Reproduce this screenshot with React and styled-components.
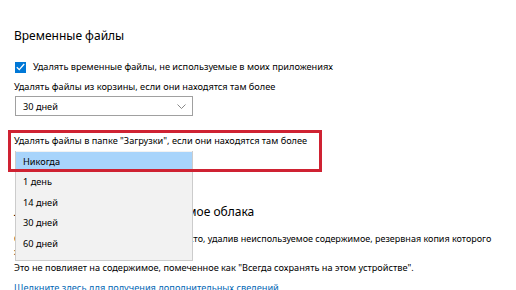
import React from 'react'
import styled, { createGlobalStyle } from 'styled-components'

const GlobalStyle = createGlobalStyle`
    html, body {
        margin: 0;
        padding: 0;
        background: #ffffff;
    }
    body {
        font-family: "Noto Sans", "Open Sans", sans-serif;
        font-size: 9.2px;
        color: #000000;
        overflow: hidden;
    }
`

const options = ['Никогда', '1 день', '14 дней', '30 дней', '60 дней']

function Checkmark() {
    return (
        <svg width="9" height="8" viewBox="0 0 9 8">
            <path d="M0.8 4.2 L3.3 6.6 L8.2 1" fill="none" stroke="#ffffff" strokeWidth="1.3" />
        </svg>
    )
}

function Chevron() {
    return (
        <svg width="9" height="5" viewBox="0 0 9 5">
            <path d="M0.5 0.5 L4.5 4.5 L8.5 0.5" fill="none" stroke="#7a7a7a" strokeWidth="0.9" />
        </svg>
    )
}

export default function App() {
    return (
        <>
            <GlobalStyle />
            <Page>
                <Heading>Временные файлы</Heading>
                <CheckRow>
                    <CheckBox><Checkmark /></CheckBox>
                    <span>Удалять временные файлы, не используемые в моих приложениях</span>
                </CheckRow>
                <Label>Удалять файлы из корзины, если они находятся там более</Label>
                <Select>
                    <span>30 дней</span>
                    <Chevron />
                </Select>

                <Section>
                    <Label>Удалять файлы в папке "Загрузки", если они находятся там более</Label>
                    <Anchor>
                        <Popup>
                            {options.map((o, i) => (
                                <Option key={o} selected={i === 0}>{o}</Option>
                            ))}
                        </Popup>
                    </Anchor>
                    <RedFrame />
                </Section>

                <SubHeading>Локально доступное содержимое облака</SubHeading>
                <Paragraph>
                    Система Windows может освободить место, удалив неиспользуемое содержимое, резервная копия которого
                    хранится в облаке, с этого компьютера.
                </Paragraph>
                <Note>Это не повлияет на содержимое, помеченное как "Всегда сохранять на этом устройстве".</Note>
                <Link>Щелкните здесь для получения дополнительных сведений</Link>
            </Page>
        </>
    )
}

const Page = styled.div`
    padding: 26px 0 0 14px;
    display: flex;
    flex-direction: column;
    align-items: flex-start;
`

const Heading = styled.div`
    font-size: 12px;
    line-height: 20px;
    color: #000;
`

const CheckRow = styled.div`
    display: flex;
    align-items: center;
    gap: 7px;
    margin: 14px 0 0 1px;
    line-height: 14px;
`

const CheckBox = styled.div`
    width: 11px;
    height: 11px;
    background: #0078d7;
    display: flex;
    align-items: center;
    justify-content: center;
`

const Label = styled.div`
    line-height: 14px;
    margin-top: 6px;
`

const Select = styled.div`
    box-sizing: border-box;
    width: 178px;
    height: 20px;
    margin: 2px 0 0 1px;
    border: 1.5px solid #a0a0a0;
    display: flex;
    align-items: center;
    justify-content: space-between;
    padding: 0 6px 0 7px;
`

const Section = styled.div`
    position: relative;
    margin-top: 18px;
    align-self: stretch;
    & > ${Label} {
        margin-top: 0;
    }
`

const Anchor = styled.div`
    position: relative;
    margin-top: 3px;
    height: 20px;
`

const Popup = styled.div`
    position: absolute;
    z-index: 1;
    left: 1px;
    top: 0;
    box-sizing: border-box;
    width: 178px;
    padding: 0.5px 0 6px;
    background: #f2f2f2;
    border: 1px solid #cccccc;
    border-top: none;
`

const Option = styled.div`
    height: 20.5px;
    line-height: 20.5px;
    padding-left: 7px;
    background: ${p => (p.selected ? '#a8d4fb' : 'transparent')};
`

const RedFrame = styled.div`
    position: absolute;
    z-index: 2;
    left: -6px;
    top: -4px;
    width: 308px;
    height: 36px;
    border: 3px solid #cf2232;
    pointer-events: none;
`

const SubHeading = styled.div`
    font-size: 12px;
    line-height: 20px;
    margin-top: 31px;
`

const Paragraph = styled.div`
    width: 486px;
    font-size: 9px;
    line-height: 13px;
    margin-top: 10px;
`

const Note = styled.div`
    line-height: 14px;
    margin-top: 3px;
`

const Link = styled.div`
    line-height: 14px;
    margin-top: 6px;
    color: #0066b4;
`
